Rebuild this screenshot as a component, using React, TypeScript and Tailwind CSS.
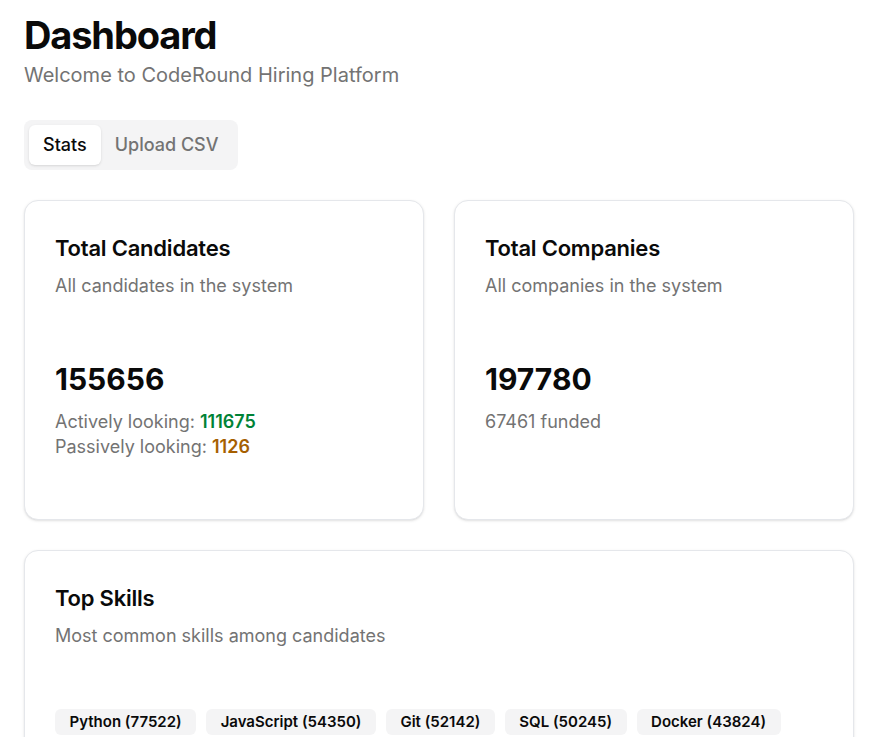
import { useState } from "react";

const skills = [
  { name: "Python", count: 77522 },
  { name: "JavaScript", count: 54350 },
  { name: "Git", count: 52142 },
  { name: "SQL", count: 50245 },
  { name: "Docker", count: 43824 },
];

function Card({
  title,
  description,
  children,
  bodyClass = "pt-[63px] pb-[30px]",
}: {
  title: string;
  description: string;
  children: React.ReactNode;
  bodyClass?: string;
}) {
  return (
    <div className="flex flex-col rounded-[14px] border border-gray-200 bg-white p-[30px] shadow-sm">
      <h3 className="mt-px text-[22px] font-semibold leading-8 tracking-[-0.01em] text-[#0a0a0a]">{title}</h3>
      <p className="mt-[10px] text-lg leading-6 text-[#737373]">{description}</p>
      <div className={bodyClass}>{children}</div>
    </div>
  );
}

export default function App() {
  const [tab, setTab] = useState("stats");

  return (
    <div className="min-h-screen bg-white px-6 pt-[15px] text-[#0a0a0a]" style={{ fontFamily: "Inter, 'Noto Sans', sans-serif" }}>
      <h1 className="text-[38px] font-bold leading-10 tracking-[-0.03em]">Dashboard</h1>
      <p className="mt-[6px] text-xl leading-7 text-[#737373]">Welcome to CodeRound Hiring Platform</p>

      {/* Tabs */}
      <div className="mt-[31px] inline-flex rounded-lg bg-[#f4f4f5] p-[5px]">
        {[
          { id: "stats", label: "Stats" },
          { id: "upload", label: "Upload CSV" },
        ].map((t) => (
          <button
            key={t.id}
            onClick={() => setTab(t.id)}
            className={`h-[40px] rounded-md px-[14px] text-lg font-medium ${
              tab === t.id ? "bg-white text-[#0a0a0a] shadow-sm" : "text-[#737373]"
            }`}
          >
            {t.label}
          </button>
        ))}
      </div>

      <div className="mt-[30px] flex w-[830px] flex-col gap-[30px]">
        <div className="grid grid-cols-2 gap-[30px]">
          <Card title="Total Candidates" description="All candidates in the system">
            <div className="text-[30px] font-bold leading-9">155656</div>
            <div className="mt-3 text-lg leading-[25px] text-[#737373]">
              <div>
                Actively looking: <span className="font-semibold text-green-700">111675</span>
              </div>
              <div>
                Passively looking: <span className="font-semibold text-yellow-700">1126</span>
              </div>
            </div>
          </Card>
          <Card title="Total Companies" description="All companies in the system">
            <div className="text-[30px] font-bold leading-9">197780</div>
            <div className="mt-3 text-lg leading-[25px] text-[#737373]">67461 funded</div>
          </Card>
        </div>

        <Card title="Top Skills" description="Most common skills among candidates" bodyClass="pt-[61px] pb-[30px]">
          <div className="flex flex-wrap gap-[10px]">
            {skills.map((s) => (
              <span key={s.name} className="rounded-md bg-[#f4f4f5] px-[14.5px] py-[3px] text-[15px] font-semibold leading-5">
                {s.name} ({s.count})
              </span>
            ))}
          </div>
        </Card>
      </div>
    </div>
  );
}
